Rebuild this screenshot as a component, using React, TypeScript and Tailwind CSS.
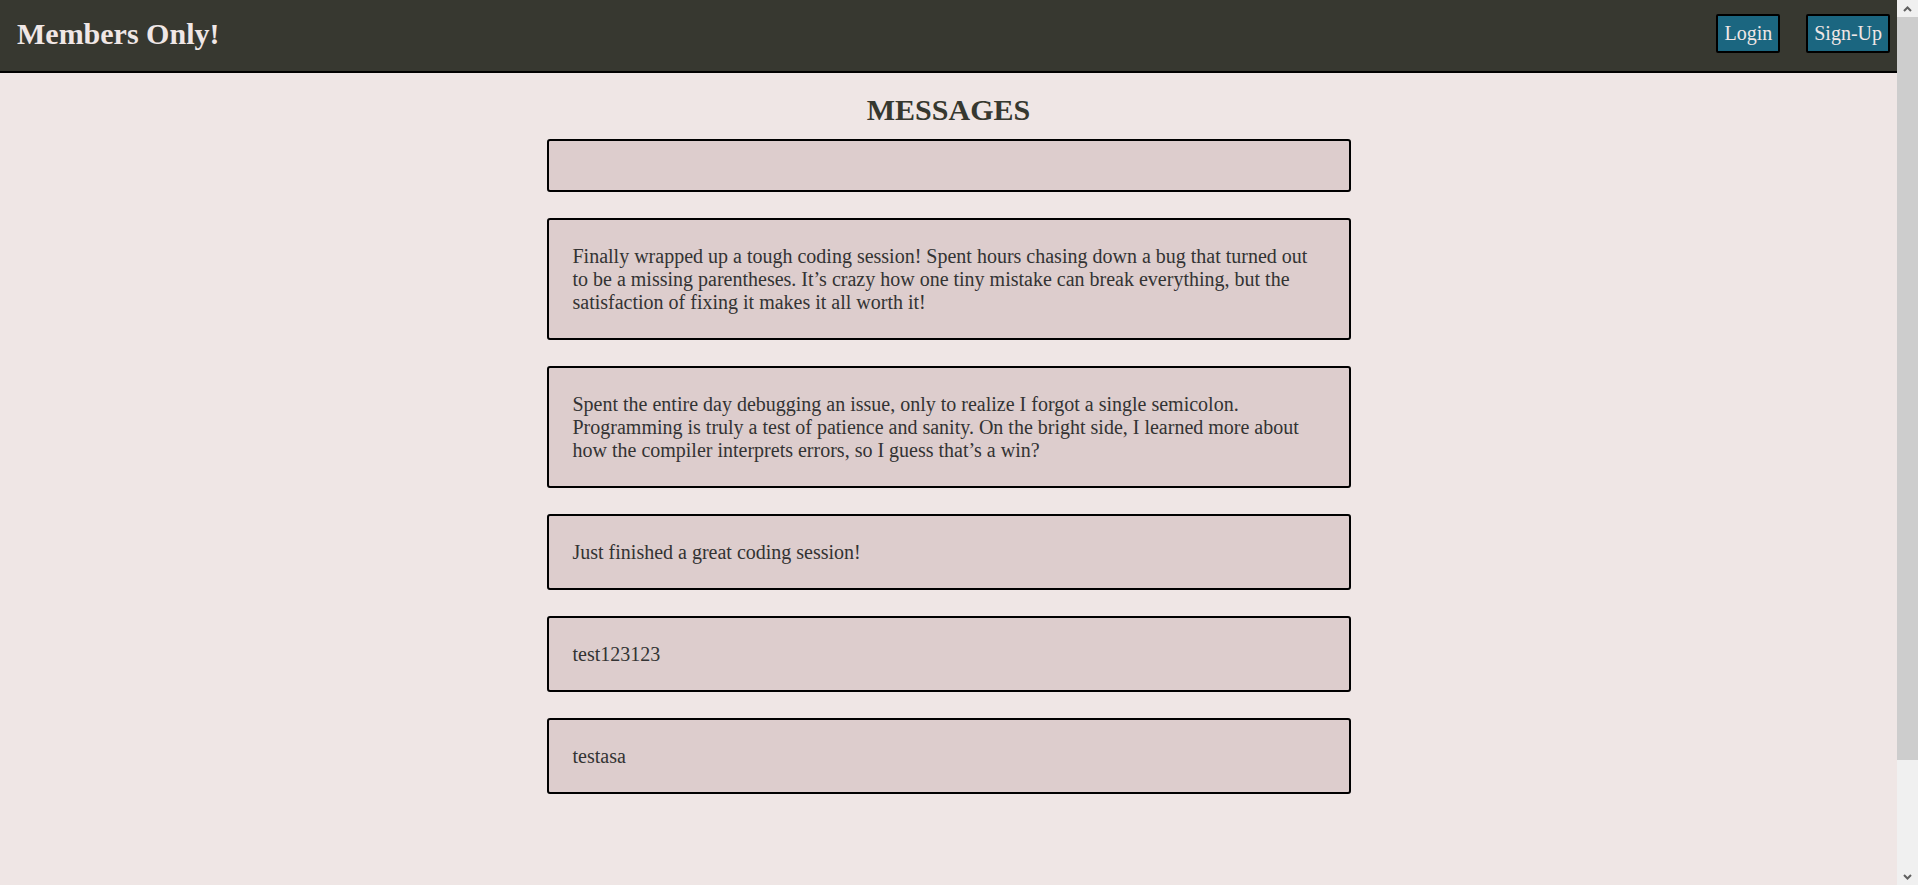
const messages = [
  '',
  'Finally wrapped up a tough coding session! Spent hours chasing down a bug that turned out to be a missing parentheses. It\u2019s crazy how one tiny mistake can break everything, but the satisfaction of fixing it makes it all worth it!',
  'Spent the entire day debugging an issue, only to realize I forgot a single semicolon. Programming is truly a test of patience and sanity. On the bright side, I learned more about how the compiler interprets errors, so I guess that\u2019s a win?',
  'Just finished a great coding session!',
  'test123123',
  'testasa',
];

function Chevron({ up }: { up?: boolean }) {
  return (
    <svg width="9" height="6" viewBox="0 0 9 6" className={up ? '' : 'rotate-180'}>
      <path d="M1 5 L4.5 1.5 L8 5" fill="none" stroke="#606060" strokeWidth="2" />
    </svg>
  );
}

export default function App() {
  return (
    <div className="flex h-screen overflow-hidden bg-[#efe6e5] text-[#36382f] font-['Liberation_Serif',serif]">
      <div className="flex-1 overflow-hidden">
        <header className="flex h-[73px] items-start justify-between border-b-2 border-black bg-[#373830] pl-[17px] pr-[7px]">
          <h1 className="pt-[17px] text-[30px] font-bold leading-[34px] text-[#f0e7e6]">Members Only!</h1>
          <nav className="flex gap-[26px] pt-[14px]">
            <button className="rounded-[2px] border-2 border-black bg-[#1b6680] px-[6px] py-[6px] text-[20px] leading-[23px] text-[#f0e7e6]">
              Login
            </button>
            <button className="rounded-[2px] border-2 border-black bg-[#1b6680] px-[6px] py-[6px] text-[20px] leading-[23px] text-[#f0e7e6]">
              Sign-Up
            </button>
          </nav>
        </header>

        <main className="flex flex-col items-center pt-[20px] pb-[218px]">
          <h2 className="mb-[12px] text-[30px] font-bold leading-[34px]">MESSAGES</h2>
          <div className="flex w-[804px] flex-col gap-[26px]">
            {messages.map((m, i) => (
              <div
                key={i}
                className="min-h-[53px] rounded-[3px] border-2 border-black bg-[#ddcdcd] px-[24px] pt-[25px] pb-[24px] text-[20px] leading-[23px] text-[#333333]"
              >
                {m}
              </div>
            ))}
          </div>
        </main>
      </div>

      <div className="flex w-[21px] flex-col bg-[#f0f0f0]">
        <div className="flex h-[17px] items-center justify-center">
          <Chevron up />
        </div>
        <div className="h-[743px] bg-[#cdcdcd]" />
        <div className="flex-1" />
        <div className="flex h-[17px] items-center justify-center">
          <Chevron />
        </div>
      </div>
    </div>
  );
}
